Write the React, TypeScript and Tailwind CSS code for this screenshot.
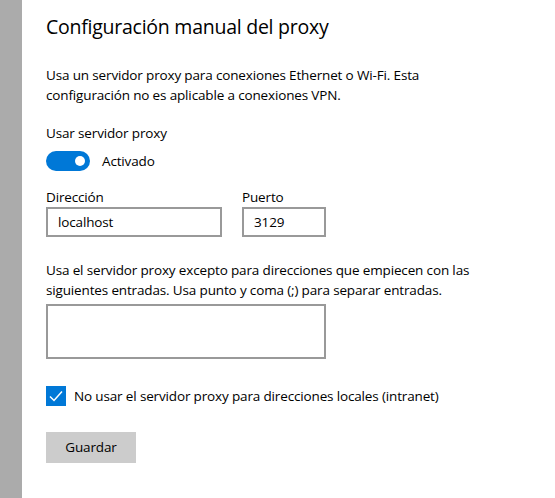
import React from "react";

function Check() {
  return (
    <svg width="20" height="20" viewBox="0 0 20 20" fill="none">
      <path d="M4 10.5l4 4 8-9" stroke="white" strokeWidth="1.5" />
    </svg>
  );
}

export default function App() {
  return (
    <div className="flex h-[498px] w-[555px] bg-white text-black font-['Open_Sans',sans-serif] text-[13.5px] tracking-[-0.15px]">
      {/* franja lateral */}
      <div className="w-[22px] shrink-0 bg-[#ababab]" />

      <div className="flex flex-col pl-[24px] pt-[13px]">
        <h2 className="text-[19.5px] leading-[28px] font-normal tracking-[-0.25px]">Configuración manual del proxy</h2>

        <p className="mt-[24px] leading-[20px]">
          <span className="block">Usa un servidor proxy para conexiones Ethernet o Wi-Fi. Esta</span>
          <span className="block">configuración no es aplicable a conexiones VPN.</span>
        </p>

        <div className="mt-[18px] leading-[20px]">Usar servidor proxy</div>

        <div className="mt-[8px] flex items-center gap-[12px]">
          <div className="flex h-[20px] w-[44px] items-center justify-end rounded-full bg-[#0078d7] pr-[5px]">
            <div className="h-[10px] w-[10px] rounded-full bg-white" />
          </div>
          <span className="leading-[20px]">Activado</span>
        </div>

        <div className="mt-[16px] flex gap-[20px]">
          <label className="flex flex-col">
            <span className="leading-[20px]">Dirección</span>
            <div className="flex h-[30px] w-[176px] items-center border-2 border-[#999999] px-[10px] leading-[20px]">
              localhost
            </div>
          </label>
          <label className="flex flex-col">
            <span className="leading-[20px]">Puerto</span>
            <div className="flex h-[30px] w-[84px] items-center border-2 border-[#999999] px-[10px] leading-[20px]">
              3129
            </div>
          </label>
        </div>

        <p className="mt-[23px] leading-[20px]">
          <span className="block">Usa el servidor proxy excepto para direcciones que empiecen con las</span>
          <span className="block">siguientes entradas. Usa punto y coma (;) para separar entradas.</span>
        </p>

        <div className="mt-[4px] h-[55px] w-[280px] border-2 border-[#999999]" />

        <div className="mt-[27px] flex items-center gap-[8px]">
          <div className="flex h-[20px] w-[20px] items-center justify-center bg-[#0078d7]">
            <Check />
          </div>
          <span className="leading-[20px]">No usar el servidor proxy para direcciones locales (intranet)</span>
        </div>

        <button className="mt-[26px] h-[31px] w-[90px] bg-[#cccccc] tracking-[-0.15px]">Guardar</button>
      </div>
    </div>
  );
}
